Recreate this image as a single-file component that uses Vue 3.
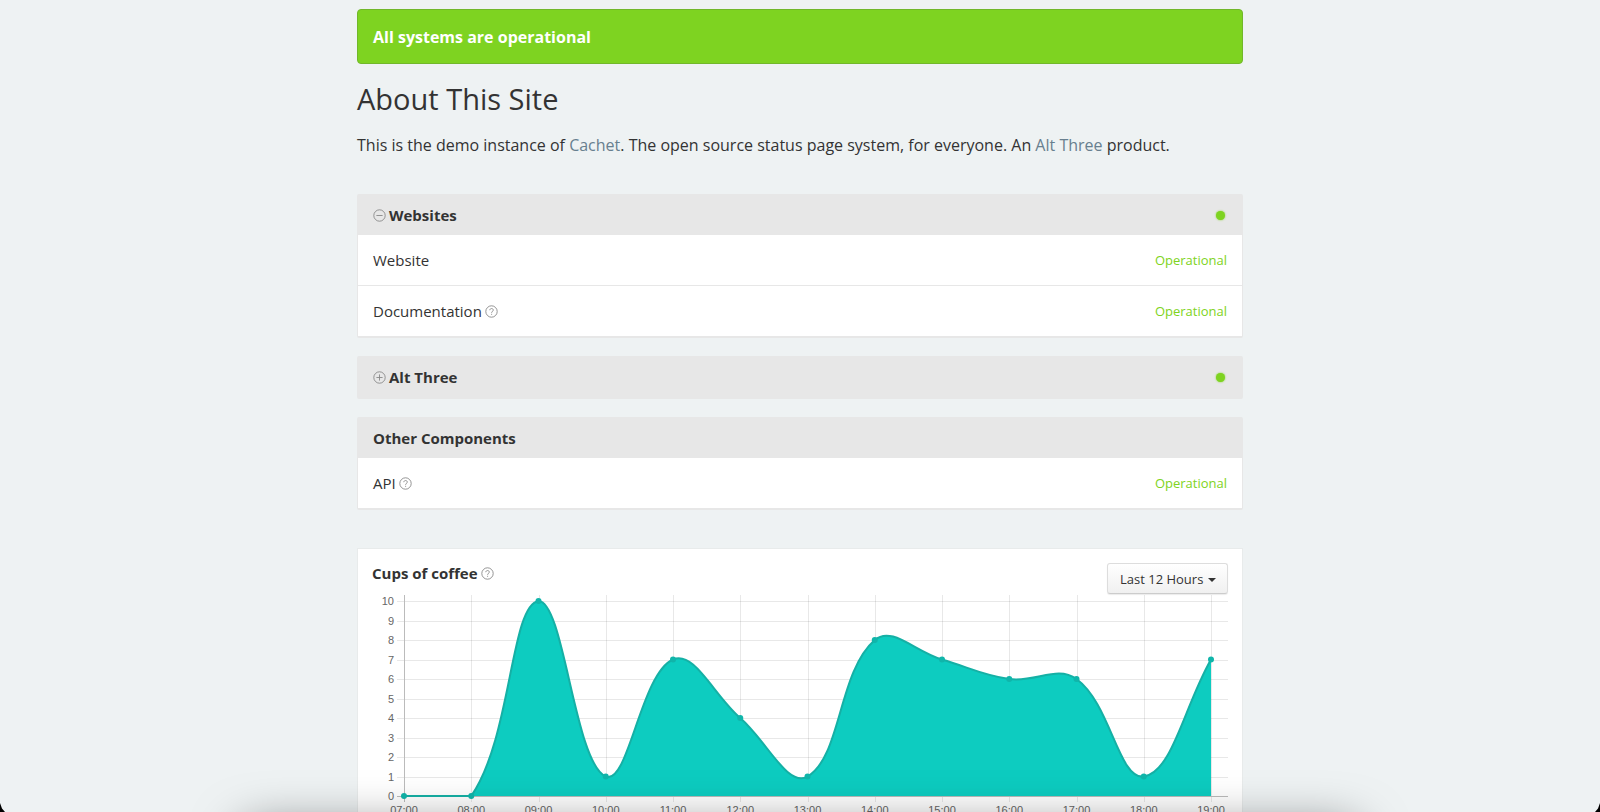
<script setup>
import { ref } from 'vue'

const groups = ref([
  {
    name: 'Websites',
    collapsible: true,
    open: true,
    components: [
      { name: 'Website', help: false, status: 'Operational' },
      { name: 'Documentation', help: true, status: 'Operational' },
    ],
  },
  { name: 'Alt Three', collapsible: true, open: false, components: [] },
  {
    name: 'Other Components',
    collapsible: false,
    open: true,
    components: [{ name: 'API', help: true, status: 'Operational' }],
  },
])

const range = ref('Last 12 Hours')

const values = [0, 0, 10, 1, 7, 4, 1, 8, 7, 6, 6, 1, 7]
const left = 32
const right = 839
const top = 7
const bottom = 202
const step = (right - left) / (values.length - 1)
const yFor = (v) => bottom - (v * (bottom - top)) / 10

const points = values.map((v, i) => ({
  x: left + i * step,
  y: yFor(v),
  label: String(i + 7).padStart(2, '0') + ':00',
}))
const rows = Array.from({ length: 11 }, (_, v) => ({ v, y: Math.round(yFor(v)) }))

// Control points are weighted by the distance to each neighbour and kept inside the scale.
const clamp = (y) => Math.min(bottom, Math.max(top, y))
const controls = points.map((p, i) => {
  const prev = points[i - 1] ?? p
  const next = points[i + 1] ?? p
  const a = Math.hypot(p.x - prev.x, p.y - prev.y)
  const b = Math.hypot(next.x - p.x, next.y - p.y)
  const fa = (0.4 * a) / (a + b)
  const fb = (0.4 * b) / (a + b)
  return {
    inner: { x: p.x - fa * (next.x - prev.x), y: clamp(p.y - fa * (next.y - prev.y)) },
    outer: { x: p.x + fb * (next.x - prev.x), y: clamp(p.y + fb * (next.y - prev.y)) },
  }
})
const line = points
  .map((p, i) => {
    if (i === 0) return `M${p.x} ${p.y}`
    const o = controls[i - 1].outer
    const n = controls[i].inner
    return `C${o.x} ${o.y} ${n.x} ${n.y} ${p.x} ${p.y}`
  })
  .join(' ')
const area = `${line} L${right} ${bottom} L${left} ${bottom} Z`
</script>

<template>
  <div class="page">
    <main class="container">
      <div class="alert" role="status">All systems are operational</div>

      <section class="about">
        <h1>About This Site</h1>
        <p>
          This is the demo instance of <a href="#cachet">Cachet</a>. The open source status page
          system, for everyone. An <a href="#alt-three">Alt Three</a> product.
        </p>
      </section>

      <section class="groups">
        <div v-for="group in groups" :key="group.name" class="group">
          <div class="group-head">
            <button
              v-if="group.collapsible"
              type="button"
              class="toggle"
              :aria-expanded="group.open"
              @click="group.open = !group.open"
            >
              <svg class="icon" viewBox="0 0 13 13" aria-hidden="true">
                <circle cx="6.5" cy="6.5" r="5.7" />
                <path :d="group.open ? 'M3.4 6.5h6.2' : 'M3.4 6.5h6.2M6.5 3.4v6.2'" />
              </svg>
              <strong>{{ group.name }}</strong>
            </button>
            <strong v-else>{{ group.name }}</strong>
            <span v-if="group.collapsible" class="dot"></span>
          </div>
          <ul v-if="group.open && group.components.length" class="items">
            <li v-for="item in group.components" :key="item.name">
              <span class="name">
                {{ item.name }}
                <svg v-if="item.help" class="icon" viewBox="0 0 13 13" aria-hidden="true">
                  <circle cx="6.5" cy="6.5" r="5.7" />
                  <path d="M4.8 5.2C4.8 3 8.3 3 8.3 5.1C8.3 6.3 6.6 6.4 6.6 7.8M6.6 8.8v1" />
                </svg>
              </span>
              <small>{{ item.status }}</small>
            </li>
          </ul>
        </div>
      </section>

      <section class="metric">
        <div class="metric-head">
          <strong class="name">
            Cups of coffee
            <svg class="icon" viewBox="0 0 13 13" aria-hidden="true">
              <circle cx="6.5" cy="6.5" r="5.7" />
              <path d="M4.8 5.2C4.8 3 8.3 3 8.3 5.1C8.3 6.3 6.6 6.4 6.6 7.8M6.6 8.8v1" />
            </svg>
          </strong>
          <div class="range">
            <select v-model="range" aria-label="Cups of coffee">
              <option>Last 12 Hours</option>
            </select>
            <svg class="caret" viewBox="0 0 8 4" aria-hidden="true"><path d="M0 0h8L4 4z" /></svg>
          </div>
        </div>
        <svg class="chart" viewBox="0 0 856 224" role="img" aria-label="Cups of coffee">
          <g class="grid">
            <path v-for="row in rows" :key="row.v" :d="`M25 ${row.y + 0.5}H856`" />
            <path
              v-for="p in points"
              :key="p.label"
              :d="`M${Math.round(p.x) + 0.5} 1V${bottom + 6}`"
            />
          </g>
          <path class="axis" :d="`M${left + 0.5} 1V${bottom + 6}M25 ${bottom + 0.5}H856`" />
          <path class="area" :d="area" />
          <path class="line" :d="line" />
          <circle v-for="p in points" :key="p.label" class="point" :cx="p.x" :cy="p.y" r="3" />
          <g class="labels">
            <text v-for="row in rows" :key="row.v" class="y" x="22" :y="row.y + 4">{{ row.v }}</text>
            <text v-for="p in points" :key="p.label" class="x" :x="p.x" y="220">{{ p.label }}</text>
          </g>
        </svg>
      </section>
    </main>
    <div class="dock-shadow"></div>
    <i class="corner corner-left"></i>
    <i class="corner corner-right"></i>
  </div>
</template>

<style>
body {
  margin: 0;
  background: #eef2f3;
}
</style>

<style scoped>
.page {
  height: 100vh;
  overflow: hidden;
  background: #eef2f3;
  color: #333;
  font: 15px/20px "Open Sans", sans-serif;
}
.container {
  max-width: 886px;
  margin: 0 auto;
  padding-top: 9px;
}
.alert {
  padding: 17px 15px 16px;
  border: 1px solid #71b72a;
  border-radius: 4px;
  background: #7ed321;
  color: #fff;
  font-size: 16px;
  font-weight: 700;
}
h1 {
  margin: 15px 0 14px;
  font-size: 29px;
  line-height: 40px;
  font-weight: 400;
}
.about p {
  margin: 0;
  font-size: 16px;
  line-height: 24px;
}
a {
  color: #687f8f;
  text-decoration: none;
}
.groups {
  display: flex;
  flex-direction: column;
  gap: 18px;
  margin-top: 37px;
}
.group {
  border: 1px solid #e7e7e7;
  border-bottom-width: 2px;
  background: #e7e7e7;
  border-radius: 2px;
}
.group-head {
  display: flex;
  align-items: center;
  justify-content: space-between;
  padding: 10px 15px;
}
.toggle {
  display: flex;
  align-items: center;
  gap: 3px;
  padding: 0;
  border: 0;
  background: none;
  color: inherit;
  font: inherit;
  cursor: pointer;
}
.icon {
  flex: none;
  width: 13px;
  height: 13px;
  fill: none;
  stroke: #888;
  stroke-width: 0.9;
}
.dot {
  width: 9px;
  height: 9px;
  margin-right: 2px;
  border-radius: 50%;
  background: #7ed321;
  box-shadow: 0 0 2px #7ed321;
}
.items {
  margin: 0;
  padding: 0;
  list-style: none;
  background: #fff;
}
.items li {
  display: flex;
  align-items: center;
  justify-content: space-between;
  padding: 15px;
}
.items li + li {
  border-top: 1px solid #e7e7e7;
}
.name {
  display: flex;
  align-items: center;
  gap: 3px;
}
small {
  color: #7ed321;
  font-size: 13px;
}
.metric {
  margin-top: 38px;
  padding: 14px;
  border: 1px solid #e8ebeb;
  background: #fff;
}
.metric-head {
  display: flex;
  align-items: flex-start;
  justify-content: space-between;
}
.range {
  position: relative;
}
.range select {
  display: block;
  height: 31px;
  padding: 0 23px 0 12px;
  appearance: none;
  border: 1px solid #ddd;
  border-bottom-color: #ccc;
  border-radius: 3px;
  background: linear-gradient(#fff, #f0f0f0);
  box-shadow: 0 1px 1px rgba(0, 0, 0, 0.08);
  color: #333;
  font: 13px/20px "Open Sans", sans-serif;
}
.caret {
  position: absolute;
  right: 12px;
  top: 15px;
  width: 8px;
  height: 4px;
  fill: #333;
  pointer-events: none;
}
.chart {
  display: block;
  width: 100%;
  overflow: visible;
}
.grid path {
  fill: none;
  stroke: rgba(0, 0, 0, 0.09);
}
.axis {
  fill: none;
  stroke: #bbb;
}
.area {
  fill: #0dccc0;
}
.line {
  fill: none;
  stroke: #15b0a5;
  stroke-width: 2;
}
.point {
  fill: #10b5aa;
}
.labels text {
  fill: #666;
  font: 11px "Liberation Sans", Arial, sans-serif;
}
.labels .y {
  text-anchor: end;
}
.labels .x {
  text-anchor: middle;
}
.dock-shadow {
  position: fixed;
  left: 15%;
  right: 15%;
  bottom: -95px;
  height: 80px;
  border-radius: 20px;
  box-shadow: 0 0 48px rgba(0, 0, 0, 0.5);
  pointer-events: none;
}
.corner {
  position: fixed;
  bottom: 0;
  width: 5px;
  height: 9px;
  background: #000;
}
.corner-left {
  left: 0;
  clip-path: polygon(0 0, 40% 60%, 100% 100%, 0 100%);
}
.corner-right {
  right: 0;
  clip-path: polygon(100% 0, 60% 60%, 0 100%, 100% 100%);
}
</style>
